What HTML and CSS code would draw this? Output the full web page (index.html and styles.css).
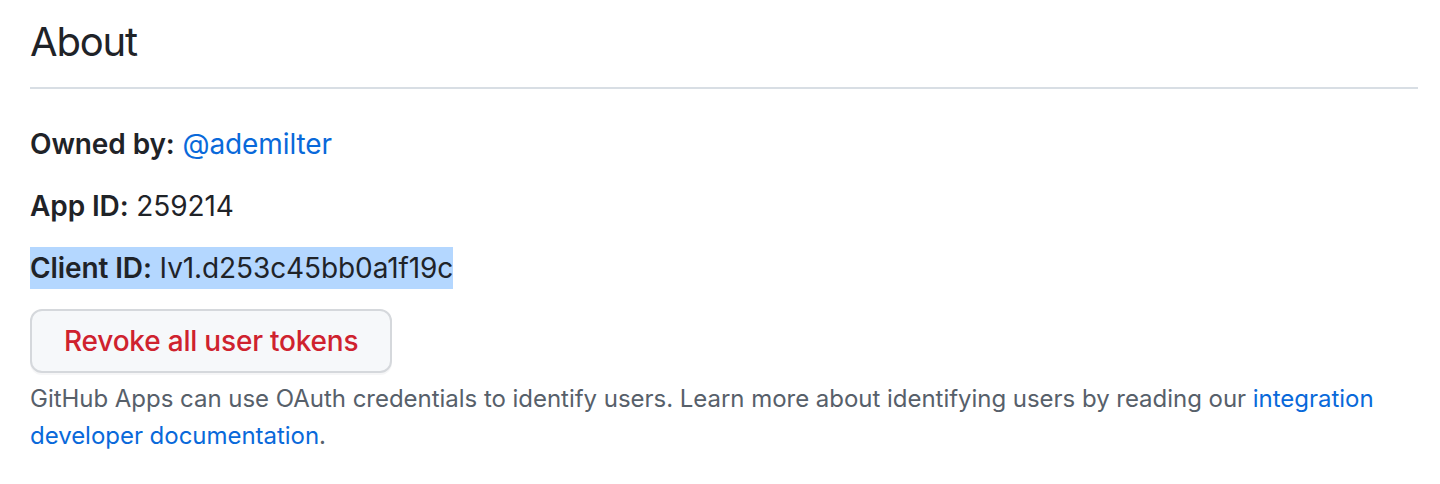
FILE: index.html
```html
<!DOCTYPE html>
<html lang="en">
<head>
<meta charset="utf-8">
<title>About</title>
<link rel="stylesheet" href="styles.css">
</head>
<body>
<section class="about">
  <div class="subhead">
    <h2 class="subhead-heading">About</h2>
  </div>
  <p class="field"><strong>Owned by:</strong> <a class="link" href="#">@ademilter</a></p>
  <p class="field"><strong>App ID:</strong> 259214</p>
  <p class="field selected"><strong>Client ID:</strong> Iv1.d253c45bb0a1f19c</p>
  <button class="btn-danger" type="button">Revoke all user tokens</button>
  <p class="note">GitHub Apps can use OAuth credentials to identify users. Learn more about identifying users by reading our <a class="link" href="#">integration developer documentation</a>.</p>
</section>
</body>
</html>
```

FILE: styles.css
```css
html, body {
  margin: 0;
  padding: 0;
  background: #ffffff;
}

body {
  font-family: Inter, "Noto Sans", "Liberation Sans", sans-serif;
  color: #1f2328;
}

.about {
  padding: 16px 22px 0 30px;
}

.subhead {
  border-bottom: 2px solid #d8dee4;
  padding-bottom: 19px;
  margin-bottom: 34px;
}

.subhead-heading {
  margin: 0;
  font-size: 40px;
  font-weight: 400;
  line-height: 52px;
  letter-spacing: -1.2px;
}

.field {
  margin: 0 0 20px;
  font-size: 28px;
  line-height: 42px;
  letter-spacing: -0.1px;
}

.field strong {
  font-weight: 600;
}

.selected {
  width: fit-content;
  background: #b4d7ff;
}

.link {
  color: #0969da;
  text-decoration: none;
}

.btn-danger {
  display: block;
  height: 64px;
  padding: 0 32px;
  font-family: inherit;
  font-size: 28px;
  font-weight: 500;
  letter-spacing: -0.2px;
  color: #cf222e;
  background: #f6f8fa;
  border: 2px solid #d5d8dc;
  border-radius: 12px;
  box-shadow: 0 2px 0 rgba(31, 35, 40, 0.04);
}

.note {
  margin: 7px 0 0;
  font-size: 24px;
  line-height: 37px;
  letter-spacing: -0.03px;
  color: #57606a;
}
```
